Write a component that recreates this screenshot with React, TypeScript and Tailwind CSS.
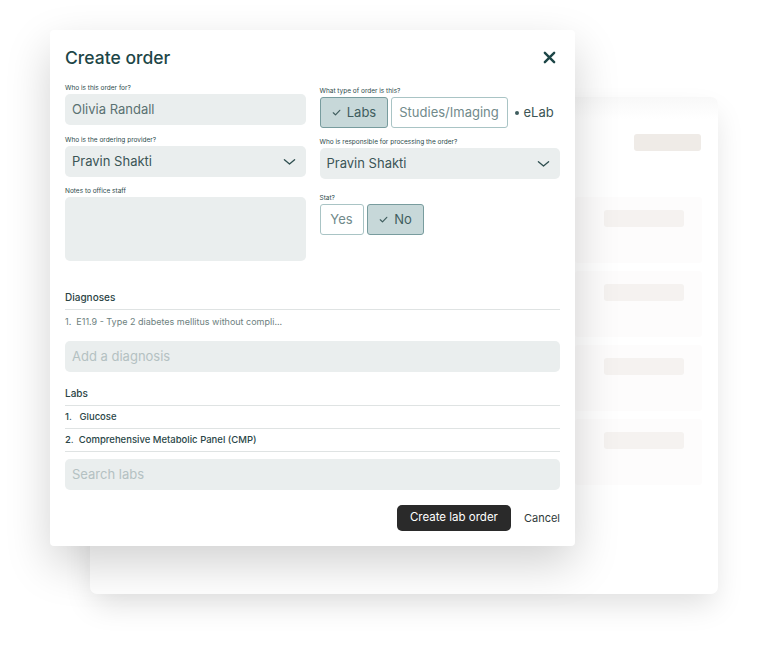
import React from 'react';

const font = { fontFamily: 'Inter, "Noto Sans", sans-serif' };

const Check = ({ className = '' }: { className?: string }) => (
  <svg viewBox="0 0 12 12" className={className} fill="none" stroke="currentColor" strokeWidth="1.3" strokeLinecap="round" strokeLinejoin="round">
    <path d="M2.5 6.3 L4.9 8.6 L9.6 3.6" />
  </svg>
);

const Chevron = () => (
  <svg viewBox="0 0 14 8" className="w-[13px] h-[8px] text-[#2f4f50]" fill="none" stroke="currentColor" strokeWidth="1.4" strokeLinecap="round" strokeLinejoin="round">
    <path d="M1.5 1.5 L7 6.2 L12.5 1.5" />
  </svg>
);

const Label = ({ children }: { children: React.ReactNode }) => (
  <div className="text-[6.5px] leading-[8px] text-[#2c4a4b] mb-[2px]">{children}</div>
);

const Field = ({ value, select, placeholder, h = 'h-[31px]' }: { value?: string; select?: boolean; placeholder?: boolean; h?: string }) => (
  <div className={`${h} bg-[#eaeeee] rounded-[5px] flex items-center justify-between pl-[7px] pr-[10px]`}>
    <span className={`text-[13px] ${placeholder ? 'text-[#b4c1c2]' : select ? 'text-[#3b5556]' : 'text-[#5a7172]'}`}>{value}</span>
    {select && <Chevron />}
  </div>
);

const Toggle = ({ label, active, w }: { label: string; active?: boolean; w: string }) => (
  <div
    className={`${w} h-[31px] rounded-[3px] border flex items-center justify-center gap-[5px] text-[13px] ${
      active ? 'bg-[#c7d8d9] border-[#789c9e] text-[#3f5d5e]' : 'bg-white border-[#a9c4c5] text-[#718a8b]'
    }`}
  >
    {active && <Check className="w-[11px] h-[11px]" />}
    {label}
  </div>
);

const BackRow = () => (
  <div className="h-[66px] w-[127px] bg-[#fdfcfc] rounded-[3px] flex items-start justify-end pt-[13px] pr-[18px]">
    <div className="w-[80px] h-[17px] rounded-[3px] bg-[#f5f2f0]" />
  </div>
);

export default function App() {
  return (
    <div className="relative w-[768px] h-[664px] bg-white overflow-hidden" style={font}>
      {/* card behind the dialog */}
      <div className="absolute left-[90px] top-[97px] w-[628px] h-[497px] bg-white rounded-[7px] shadow-[0_14px_30px_-4px_rgba(0,0,0,0.13)] flex flex-col items-end pr-[16px]">
        <div className="w-full h-[22px] bg-gradient-to-b from-[#f8f8f8] to-white rounded-t-[7px] -mr-[16px] mb-[15px]" />
        <div className="w-[67px] h-[17px] rounded-[3px] bg-[#efebe7] mr-[1px]" />
        <div className="flex flex-col gap-[8px] mt-[46px]">
          <BackRow />
          <BackRow />
          <BackRow />
          <BackRow />
        </div>
      </div>

      {/* dialog */}
      <div className="absolute left-[50px] top-[30px] w-[525px] h-[516px] bg-white rounded-[4px] shadow-[0_18px_45px_rgba(0,0,0,0.18)] px-[15px] pt-[17px]">
        <div className="flex items-center justify-between">
          <h1 className="text-[17.5px] font-medium text-[#1d4647] leading-[22px]">Create order</h1>
          <svg viewBox="0 0 14 14" className="w-[13px] h-[13px] mr-[4px] -mt-[2px] text-[#1d4647]" fill="none" stroke="currentColor" strokeWidth="2.6" strokeLinecap="round">
            <path d="M2 2 L12 12 M12 2 L2 12" />
          </svg>
        </div>

        <div className="grid grid-cols-2 gap-x-[14px] mt-[15px]">
          <div className="flex flex-col">
            <Label>Who is this order for?</Label>
            <Field value="Olivia Randall" />
            <div className="h-[11px]" />
            <Label>Who is the ordering provider?</Label>
            <Field value="Pravin Shakti" select />
            <div className="h-[10px]" />
            <Label>Notes to office staff</Label>
            <Field h="h-[64px]" />
          </div>
          <div className="flex flex-col pt-[3px]">
            <Label>What type of order is this?</Label>
            <div className="flex items-center gap-[3px]">
              <Toggle label="Labs" active w="w-[68px]" />
              <Toggle label="Studies/Imaging" w="w-[117px]" />
              <div className="flex items-center ml-[4px] gap-[5px] text-[13px] text-[#3b5556]">
                <span className="w-[4px] h-[4px] rounded-full bg-[#3f5d5e]" />
                eLab
              </div>
            </div>
            <div className="h-[10px]" />
            <Label>Who is responsible for processing the order?</Label>
            <Field value="Pravin Shakti" select />
            <div className="h-[15px]" />
            <Label>Stat?</Label>
            <div className="flex gap-[3px]">
              <Toggle label="Yes" w="w-[44px]" />
              <Toggle label="No" active w="w-[57px]" />
            </div>
          </div>
        </div>

        <div className="mt-[30px]">
          <div className="text-[10px] font-medium text-[#2a4344] leading-[12px] pb-[6px] border-b border-[#dfe3e3]">Diagnoses</div>
          <div className="text-[9px] text-[#6e7f80] leading-[11px] pt-[6px]">1.&nbsp; E11.9 - Type 2 diabetes mellitus without compli...</div>
          <div className="mt-[14px]">
            <Field value="Add a diagnosis" placeholder />
          </div>
        </div>

        <div className="mt-[15px]">
          <div className="text-[10px] font-medium text-[#2a4344] leading-[12px] pb-[6px] border-b border-[#dfe3e3]">Labs</div>
          <div className="text-[9.5px] font-medium text-[#2a4647] h-[23px] flex items-center border-b border-[#dfe3e3]">1.&nbsp;&nbsp; Glucose</div>
          <div className="text-[9.5px] font-medium text-[#2a4647] h-[23px] flex items-center border-b border-[#dfe3e3]">2.&nbsp; Comprehensive Metabolic Panel (CMP)</div>
          <div className="mt-[7px]">
            <Field value="Search labs" placeholder />
          </div>
        </div>

        <div className="flex justify-end items-center gap-[13px] mt-[15px]">
          <button className="h-[26px] w-[114px] rounded-[5px] bg-[#2a2a2a] text-white text-[11.5px]">Create lab order</button>
          <span className="text-[11px] text-[#2f3a3a]">Cancel</span>
        </div>
      </div>
    </div>
  );
}
